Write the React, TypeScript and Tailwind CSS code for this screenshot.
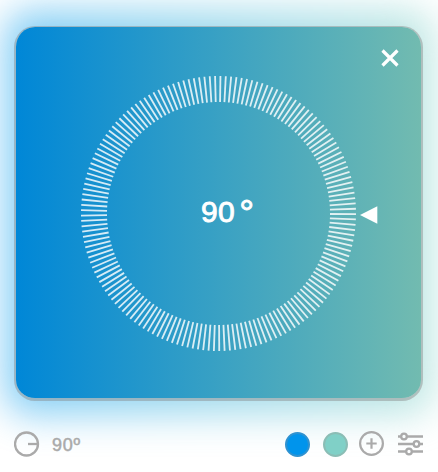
const TICKS = 161;

function Dial() {
  return (
    <svg className="absolute inset-0 size-full" viewBox="0 0 438 472" fill="none">
      <g stroke="#fff" strokeOpacity="0.82" strokeWidth="1.8">
        {Array.from({ length: TICKS }, (_, i) => (
          <line key={i} x1="330" x2="356" y1="213.5" y2="213.5" transform={`rotate(${0.25 + (i * 360) / TICKS} 218.5 213.5)`} />
        ))}
      </g>
      <path d="M360 215L377.3 206.3V223.7Z" fill="#fff" />
    </svg>
  );
}

export default function App() {
  return (
    <main className="relative h-[472px] w-[438px] overflow-hidden bg-white px-[14px] pt-[26px] font-['Liberation_Sans',Arial,sans-serif]">
      <div className="absolute top-[11px] left-[5px] h-[403px] w-[428px] rounded-[24px] bg-linear-to-r/srgb from-[#0099ee] to-[#80d0c5] opacity-50 blur-[19px]" />
      <section className="relative h-[375px] w-[409px] rounded-[21px] border-x-2 border-t border-b-[3px] border-[#888888]/45 bg-linear-to-r/srgb from-[#0087d7] to-[#72bbb0] bg-clip-padding">
        <button aria-label="Close" className="absolute top-[22px] right-[22px] size-[18px]">
          <svg viewBox="0 0 18 18" className="size-full" stroke="#fff" strokeWidth="3.2">
            <path d="M1.5 1.5L16.5 16.5M16.5 1.5L1.5 16.5" />
          </svg>
        </button>
        <div className="flex h-full items-center justify-center pb-[2px] pl-[18px] text-[30px] text-white [-webkit-text-stroke:0.9px_#fff]">
          <span className="tracking-[0.5px]">90</span>
          <span className="ml-[4px] h-[34px] text-[37px] leading-[37px]">°</span>
        </div>
      </section>
      <Dial />
      <footer className="relative mt-[29px] flex h-[28px] w-[409px] items-center text-[#aaaaaa]">
        <svg className="size-[26px]" viewBox="0 0 26 26" fill="none" stroke="currentColor" strokeWidth="2.3">
          <circle cx="12.5" cy="13" r="11.5" /><path d="M14 13H24" />
        </svg>
        <span className="mt-[3px] ml-3 text-[18px] tracking-[0.8px] [-webkit-text-stroke:0.5px_#aaaaaa]">90º</span>
        <div className="ml-auto flex items-center">
          <span className="size-[25px] rounded-full border-2 border-[#2f92d0] bg-[#0094ec]" />
          <span className="ml-[13px] size-[25px] rounded-full border-2 border-[#8bbdb5] bg-[#80d0c7]" />
          <svg className="mb-[2px] ml-[11px] size-[25px]" viewBox="0 0 25 25" fill="none" stroke="currentColor" strokeWidth="2.2">
            <circle cx="12.5" cy="12.5" r="11.4" /><path d="M7.3 12.5H17.7M12.5 7.3V17.7" />
          </svg>
          <svg className="ml-[14px] h-[24px] w-[25px]" viewBox="0 0 25 24" fill="none" stroke="currentColor" strokeWidth="2.3">
            <path d="M0 4.5H3M9 4.5H25M0 12H15.5M21.5 12H25M0 19.5H8M14 19.5H25" />
            <circle cx="6" cy="4.5" r="2.8" /><circle cx="18.5" cy="12" r="2.8" /><circle cx="11" cy="19.5" r="2.8" />
          </svg>
        </div>
      </footer>
    </main>
  );
}
